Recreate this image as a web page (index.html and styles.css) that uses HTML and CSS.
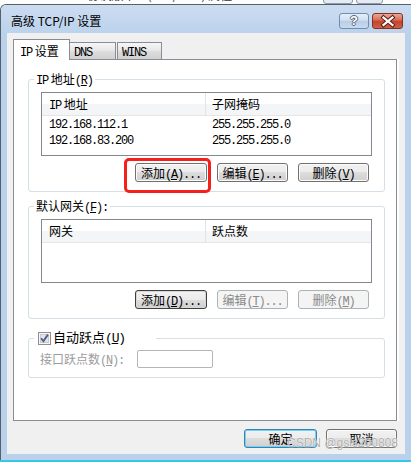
FILE: index.html
```html
<!DOCTYPE html>
<html lang="zh">
<head>
<meta charset="utf-8">
<title>高级 TCP/IP 设置</title>
<link rel="stylesheet" href="styles.css">
</head>
<body>
<div class="behind">
  <span class="behind-title">Internet 协议版本 4 (TCP/IPv4) 属性</span>
  <span class="behind-btns"><i class="bb1"></i><i class="bb2"></i></span>
</div>
<div class="window">
  <div class="titlebar">
    <span class="title">高级 TCP/IP 设置</span>
    <div class="caption-btns">
      <span class="cap-btn help">?</span>
      <span class="cap-btn close">
        <svg width="31" height="16" viewBox="0 0 31 16"><path d="M11.5 4.5 L20.5 12 M20.5 4.5 L11.5 12" stroke="#5a2118" stroke-width="4.2" stroke-linecap="square" fill="none"/><path d="M11.5 4.5 L20.5 12 M20.5 4.5 L11.5 12" stroke="#ffffff" stroke-width="2.2" stroke-linecap="square" fill="none"/></svg>
      </span>
    </div>
  </div>
  <div class="client">
    <div class="tabs">
      <div class="tab active"><span class="m">IP</span> 设置</div>
      <div class="tab dns"><span class="m">DNS</span></div>
      <div class="tab wins"><span class="m">WINS</span></div>
    </div>
    <div class="panel">
      <fieldset class="group">
        <legend><span class="m">IP</span> 地址<span class="m">(<u>R</u>)</span></legend>
        <div class="gb">
          <div class="list">
            <div class="list-head"><span class="col c1"><span class="m">IP</span> 地址</span><span class="col c2">子网掩码</span></div>
            <div class="list-body">
              <div class="row"><span class="col c1 m">192.168.112.1</span><span class="col c2 m">255.255.255.0</span></div>
              <div class="row"><span class="col c1 m">192.168.83.200</span><span class="col c2 m">255.255.255.0</span></div>
            </div>
          </div>
          <div class="btn-row">
            <span class="btn w72 marked">添加<span class="m">(<u>A</u>)...</span><span class="mark"></span></span>
            <span class="btn w71">编辑<span class="m">(<u>E</u>)...</span></span>
            <span class="btn w71">删除<span class="m">(<u>V</u>)</span></span>
          </div>
        </div>
      </fieldset>

      <fieldset class="group g2">
        <legend>默认网关<span class="m">(<u>F</u>):</span></legend>
        <div class="gb">
          <div class="list">
            <div class="list-head"><span class="col c1">网关</span><span class="col c2">跃点数</span></div>
            <div class="list-body"></div>
          </div>
          <div class="btn-row">
            <span class="btn w72 focus">添加<span class="m">(<u>D</u>)...</span></span>
            <span class="btn w71 disabled">编辑<span class="m">(<u>T</u>)...</span></span>
            <span class="btn w71 disabled">删除<span class="m">(<u>M</u>)</span></span>
          </div>
        </div>
      </fieldset>

      <fieldset class="group g3">
        <legend class="chk-legend">
          <svg class="chk" width="13" height="13" viewBox="0 0 13 13"><rect x="0.5" y="0.5" width="12" height="12" fill="#f6f6f6" stroke="#8e8f8f"/><rect x="2.5" y="2.5" width="8" height="8" fill="#e4e4e4" stroke="#c9c9c9"/><path d="M3.2 6.3 L5.4 9.2 L9.9 2.6" stroke="#4b5f93" stroke-width="1.9" fill="none"/></svg>
          <span class="chk-label">自动跃点<span class="m">(<u>U</u>)</span></span>
        </legend>
        <div class="metric-row">
          <span class="metric-label">接口跃点数<span class="m">(<u>N</u>):</span></span>
          <span class="textbox"></span>
        </div>
      </fieldset>
    </div>
    <div class="dialog-btns">
      <span class="btn w73 default">确定</span>
      <span class="btn w71">取消</span>
    </div>
  </div>
</div>
<div class="cyan-line"></div>
<div class="watermark">CSDN @gsls200808</div>
</body>
</html>
```

FILE: styles.css
```css
* { box-sizing: border-box; }
html, body { margin: 0; padding: 0; }
body {
  width: 411px;
  height: 462px;
  overflow: hidden;
  position: relative;
  background: #ffffff;
  font-family: "Noto Sans CJK SC", "Liberation Sans", sans-serif;
  font-size: 12px;
  color: #000;
}
.m {
  font-family: "Liberation Mono", "Noto Sans CJK SC", monospace;
  letter-spacing: -1.2px;
}
u { text-underline-offset: 1px; }

/* window behind */
.behind {
  height: 4px;
  overflow: hidden;
  display: flex;
  background: #fdfdfd;
}
.behind-title {
  margin-left: 40px;
  margin-top: -11px;
  line-height: 12px;
  color: #333;
  white-space: nowrap;
}
.behind-btns {
  margin-left: auto;
  margin-right: 28px;
  display: flex;
  gap: 3px;
}
.behind-btns i {
  display: block;
  height: 10px;
  margin-top: -6px;
  border: 1px solid #8c9aab;
  border-radius: 3px;
  background: #e4ebf3;
}
.behind-btns .bb1 { width: 30px; }
.behind-btns .bb2 { width: 27px; }

/* window */
.window {
  height: 456px;
  display: flex;
  flex-direction: column;
  background: #b9d1ea;
  border-top: 1px solid #56606b;
  border-left: 1px solid #56606b;
  border-top-left-radius: 6px;
}
.titlebar {
  height: 28px;
  flex: none;
  display: flex;
  align-items: flex-start;
  padding: 0 8px 0 10px;
  border-top-left-radius: 5px;
  background: linear-gradient(#cbdcf1, #bcd3ec);
}
.title {
  margin-top: 9px;
  line-height: 14px;
  white-space: nowrap;
}
.caption-btns {
  margin-left: auto;
  margin-top: 8px;
  display: flex;
  gap: 3px;
}
.cap-btn {
  display: block;
  height: 16px;
  border-radius: 3px;
}
.cap-btn.help {
  width: 30px;
  border: 1px solid #6f8cb1;
  background: linear-gradient(#e6eef8, #d2e0f1 45%, #b9cde6 50%, #c9daee);
  text-align: center;
  font-family: "Liberation Sans", sans-serif;
  font-weight: bold;
  font-size: 13px;
  line-height: 14px;
  color: #fff;
  text-shadow: 1px 0 0 #56667a, -1px 0 0 #56667a, 0 1px 0 #56667a, 0 -1px 0 #56667a;
}
.cap-btn.close {
  width: 31px;
  border: 1px solid #84321f;
  background: linear-gradient(#eaa897, #d76a52 45%, #c4432c 50%, #d25e45);
  overflow: hidden;
}
.cap-btn.close svg { display: block; margin: -1px 0 0 -1px; }

/* client area */
.client {
  height: 421px;
  flex: none;
  margin: 0 6px 0 6px;
  padding: 6px 8px 0 6px;
  background: #f0f0f0;
}

.tabs {
  height: 21px;
  display: flex;
  align-items: flex-end;
  position: relative;
  z-index: 1;
}
.tab {
  border: 1px solid #898c95;
  border-bottom: none;
  white-space: nowrap;
}
.tab.active {
  width: 57px;
  height: 21px;
  padding: 1px 0 0 6px;
  line-height: 19px;
  background: #fff;
}
.tab.dns, .tab.wins {
  height: 17px;
  margin-bottom: 1px;
  padding-left: 4px;
  line-height: 16px;
  background: linear-gradient(#f6f6f6, #e8e8e8 45%, #dcdcdc 55%, #d0d0d0);
}
.tab.dns { width: 46px; border-left: none; }
.tab.wins { width: 45px; margin-left: 1px; }

.panel {
  height: 362px;
  margin-top: -1px;
  padding: 12px 11px 0 14px;
  background: #fff;
  border: 1px solid #898c95;
  box-shadow: 2px 0 0 #ffffff;
}

/* group boxes */
.group {
  margin: 0;
  padding: 6px 0 9px;
  min-width: 0;
  border: 1px solid #d5dfe5;
  border-radius: 3px;
}
.group legend {
  margin-left: 5px;
  padding: 0 2px;
  height: 14px;
  line-height: 14px;
  white-space: nowrap;
}
.g2 { margin-top: 7px; }
.g3 { margin-top: 12px; padding: 5px 0 9px; }
.gb { margin: 0 12px; }

.list {
  height: 64px;
  border: 1px solid #828790;
  background: #fff;
}
.list-head {
  display: flex;
  height: 23px;
  line-height: 22px;
  border-bottom: 1px solid #e5e5e5;
  background: linear-gradient(#ffffff 50%, #f4f5f7 50%);
}
.col { display: block; white-space: nowrap; }
.c1 { width: 164px; padding-left: 7px; }
.c2 { padding-left: 6px; }
.list-head .c1 { border-right: 1px solid #e2e3e6; }
.list-body { padding-top: 1px; }
.row { display: flex; height: 16px; line-height: 16px; }

/* buttons */
.btn-row {
  display: flex;
  justify-content: flex-end;
  gap: 10px;
  margin-top: 7px;
  padding-right: 3px;
}
.btn {
  display: block;
  position: relative;
  height: 19px;
  border: 1px solid #707070;
  border-radius: 3px;
  background: linear-gradient(#f2f2f2, #ebebeb 50%, #dddddd 50%, #cfcfcf);
  box-shadow: inset 0 0 0 1px #fbfbfb;
  text-align: center;
  line-height: 17px;
  white-space: nowrap;
}
.w71 { width: 71px; }
.w72 { width: 72px; }
.w73 { width: 73px; }
.btn.focus {
  border-color: #3d3d3d;
  box-shadow: inset 0 0 0 1px #d8d8d8;
}
.btn.disabled {
  border-color: #adb2b5;
  background: #f4f4f4;
  box-shadow: none;
  color: #8a8a8a;
}
.btn.default {
  border-color: #3c7fb1;
  box-shadow: inset 0 0 0 1px #6fd3f7;
}
.mark {
  position: absolute;
  left: -12px;
  top: -6px;
  width: 87px;
  height: 35px;
  border: 3px solid #f5201a;
  border-radius: 5px;
}

/* auto metric */
.chk-legend {
  display: flex;
  align-items: center;
  width: 122px;
}
.group legend.chk-legend { padding-left: 4px; }
.chk { display: block; flex: none; }
.chk-label { margin-left: 2px; font-size: 13px; }
.metric-row {
  display: flex;
  align-items: center;
  height: 18px;
  margin-left: 11px;
}
.metric-label {
  width: 97px;
  color: #9c9c9c;
  white-space: nowrap;
}
.textbox {
  display: block;
  width: 76px;
  height: 18px;
  border: 1px solid #b5b5b5;
  border-radius: 2px;
  background: #fff;
}

.dialog-btns {
  display: flex;
  justify-content: flex-end;
  gap: 9px;
  margin-top: 8px;
}

.cyan-line {
  height: 2px;
  background: #36c8e4;
}

.watermark {
  position: absolute;
  left: 287px;
  top: 436px;
  font-family: "Liberation Sans", sans-serif;
  font-size: 12px;
  line-height: 14px;
  color: rgba(130, 130, 130, 0.65);
  text-shadow: 0 0 1px #fff, 0 0 1px #fff;
  white-space: nowrap;
}
```
